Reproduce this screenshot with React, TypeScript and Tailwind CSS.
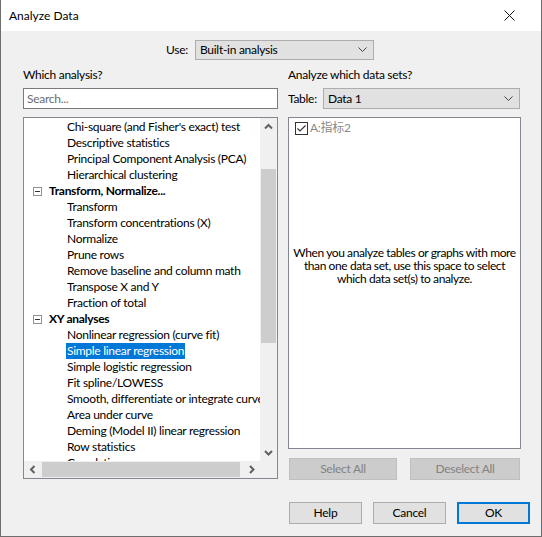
import React from "react";

type Row = { kind: "item" | "group"; text: string; selected?: boolean };

const rows: Row[] = [
  { kind: "item", text: "Chi-square (and Fisher's exact) test" },
  { kind: "item", text: "Descriptive statistics" },
  { kind: "item", text: "Principal Component Analysis (PCA)" },
  { kind: "item", text: "Hierarchical clustering" },
  { kind: "group", text: "Transform, Normalize..." },
  { kind: "item", text: "Transform" },
  { kind: "item", text: "Transform concentrations (X)" },
  { kind: "item", text: "Normalize" },
  { kind: "item", text: "Prune rows" },
  { kind: "item", text: "Remove baseline and column math" },
  { kind: "item", text: "Transpose X and Y" },
  { kind: "item", text: "Fraction of total" },
  { kind: "group", text: "XY analyses" },
  { kind: "item", text: "Nonlinear regression (curve fit)" },
  { kind: "item", text: "Simple linear regression", selected: true },
  { kind: "item", text: "Simple logistic regression" },
  { kind: "item", text: "Fit spline/LOWESS" },
  { kind: "item", text: "Smooth, differentiate or integrate curve" },
  { kind: "item", text: "Area under curve" },
  { kind: "item", text: "Deming (Model II) linear regression" },
  { kind: "item", text: "Row statistics" },
  { kind: "item", text: "Correlation" },
];

const Chevron = () => (
  <svg width="9" height="6" viewBox="0 0 9 6" className="shrink-0">
    <polyline points="0.5,0.5 4.5,4.5 8.5,0.5" fill="none" stroke="#444" strokeWidth="1" />
  </svg>
);

const Arrow = ({ dir }: { dir: "up" | "down" | "left" | "right" }) => {
  const pts: Record<string, string> = {
    up: "1,5.5 4.5,2 8,5.5",
    down: "1,2 4.5,5.5 8,2",
    left: "5.5,1 2,4.5 5.5,8",
    right: "2,1 5.5,4.5 2,8",
  };
  const vertical = dir === "up" || dir === "down";
  return (
    <svg width={vertical ? 9 : 8} height={vertical ? 8 : 9} viewBox={vertical ? "0 0 9 8" : "0 0 8 9"}>
      <polyline points={pts[dir]} fill="none" stroke="#606060" strokeWidth="2" />
    </svg>
  );
};

function Select({ value, w }: { value: string; w: string }) {
  return (
    <div
      className={`${w} h-[21px] flex items-center justify-between bg-[#e1e1e1] border border-[#adadad] pl-[4px] pr-[6px] text-black`}
    >
      <span>{value}</span>
      <Chevron />
    </div>
  );
}

function Button({ label, disabled, primary }: { label: string; disabled?: boolean; primary?: boolean }) {
  if (disabled)
    return (
      <div className="h-[22px] w-full flex items-center justify-center bg-[#cccccc] border border-[#bfbfbf] text-[#838383]">
        {label}
      </div>
    );
  return (
    <div
      className={`h-[22px] w-[73px] flex items-center justify-center bg-[#e1e1e1] text-black ${
        primary ? "border-2 border-[#0078d7]" : "border border-[#adadad]"
      }`}
    >
      {label}
    </div>
  );
}

export default function App() {
  return (
    <div
      className="w-[542px] h-[537px] bg-[#f0f0f0] border-x border-b border-[#6e6e6e] flex flex-col text-[12px] leading-[16px] tracking-[-0.28px] text-black overflow-hidden"
      style={{ fontFamily: "Lato, 'Noto Sans CJK SC', sans-serif" }}
    >
      {/* Title bar */}
      <div className="h-[31px] bg-white flex items-center justify-between pl-[8px] pr-[26px] shrink-0">
        <span className="text-[12px] tracking-normal">Analyze Data</span>
        <svg width="11" height="11" viewBox="0 0 11 11">
          <path d="M0.5 0.5 L10.5 10.5 M10.5 0.5 L0.5 10.5" stroke="#111" strokeWidth="1" />
        </svg>
      </div>

      {/* Use row */}
      <div className="mt-[9px] flex items-center h-[20px]">
        <div className="w-[194px] text-right pr-[7px]">Use:</div>
        <div className="w-[179px] h-[20px] flex items-center justify-between bg-[#e1e1e1] border border-[#adadad] pl-[4px] pr-[6px]">
          <span>Built-in analysis</span>
          <Chevron />
        </div>
      </div>

      {/* Columns */}
      <div className="flex mt-[7px] ml-[22px] gap-[10px]">
        {/* Left column */}
        <div className="w-[255px] flex flex-col">
          <div className="h-[16px]">Which analysis?</div>
          <div className="mt-[5px] h-[21px] bg-white border border-[#7a7a7a] flex items-center pl-[3px] text-[#6d6d6d]">
            Search...
          </div>
          <div className="mt-[8px] h-[362px] bg-white border border-[#828790] flex flex-col">
            <div className="flex h-[343px]">
              <div className="w-[236px] overflow-hidden pt-[1px] whitespace-nowrap">
                {rows.map((r, i) =>
                  r.kind === "group" ? (
                    <div key={i} className="h-[16px] flex items-center">
                      <div className="ml-[9px] w-[9px] h-[9px] border border-[#919191] bg-white flex items-center justify-center">
                        <div className="w-[5px] h-[1px] bg-[#333]" />
                      </div>
                      <span className="ml-[7px] font-bold">{r.text}</span>
                    </div>
                  ) : (
                    <div key={i} className="h-[16px] flex items-center">
                      <span
                        className={`ml-[42px] px-[1px] h-[16px] flex items-center ${
                          r.selected ? "bg-[#0078d7] text-white" : ""
                        }`}
                      >
                        {r.text}
                      </span>
                    </div>
                  )
                )}
              </div>
              {/* vertical scrollbar */}
              <div className="w-[17px] bg-[#f0f0f0] flex flex-col">
                <div className="h-[17px] flex items-center justify-center">
                  <Arrow dir="up" />
                </div>
                <div className="flex-1 px-[1px]">
                  <div className="mt-[34px] h-[174px] bg-[#cdcdcd]" />
                </div>
                <div className="h-[17px] flex items-center justify-center">
                  <Arrow dir="down" />
                </div>
              </div>
            </div>
            {/* horizontal scrollbar */}
            <div className="flex h-[17px]">
              <div className="w-[236px] bg-[#f0f0f0] flex items-center">
                <div className="w-[17px] h-[17px] flex items-center justify-center">
                  <Arrow dir="left" />
                </div>
                <div className="flex-1 h-full py-[1px]">
                  <div className="ml-[1px] w-[198px] h-full bg-[#cdcdcd]" />
                </div>
                <div className="w-[17px] h-[17px] flex items-center justify-center">
                  <Arrow dir="right" />
                </div>
              </div>
              <div className="w-[17px] bg-[#f0f0f0]" />
            </div>
          </div>
        </div>

        {/* Right column */}
        <div className="w-[233px] flex flex-col">
          <div className="h-[16px]">Analyze which data sets?</div>
          <div className="mt-[5px] h-[21px] flex items-center">
            <span className="w-[35px]">Table:</span>
            <Select value="Data 1" w="w-[197px]" />
          </div>
          <div className="mt-[8px] h-[332px] bg-white border border-[#828790] flex flex-col">
            <div className="mt-[3px] ml-[6px] h-[14px] flex items-center">
              <div className="w-[13px] h-[13px] border border-[#333] bg-white flex items-center justify-center">
                <svg width="11" height="11" viewBox="0 0 11 11">
                  <polyline points="1.5,5.5 4,8 9.5,2.5" fill="none" stroke="#333" strokeWidth="1.2" />
                </svg>
              </div>
              <span className="ml-[2px] text-[#8a8a8a]">A:指标2</span>
            </div>
            <div className="mt-[111px] text-center leading-[13px] whitespace-nowrap tracking-[-0.4px]">
              When you analyze tables or graphs with more
              <br />
              than one data set, use this space to select
              <br />
              which data set(s) to analyze.
            </div>
          </div>
          <div className="mt-[9px] flex">
            <div className="ml-[1px] w-[108px]">
              <Button label="Select All" disabled />
            </div>
            <div className="ml-[13px] w-[110px]">
              <Button label="Deselect All" disabled />
            </div>
          </div>
        </div>
      </div>

      {/* Bottom buttons */}
      <div className="mt-[22px] flex ml-[288px] gap-[11px]">
        <Button label="Help" />
        <Button label="Cancel" />
        <Button label="OK" primary />
      </div>
    </div>
  );
}
